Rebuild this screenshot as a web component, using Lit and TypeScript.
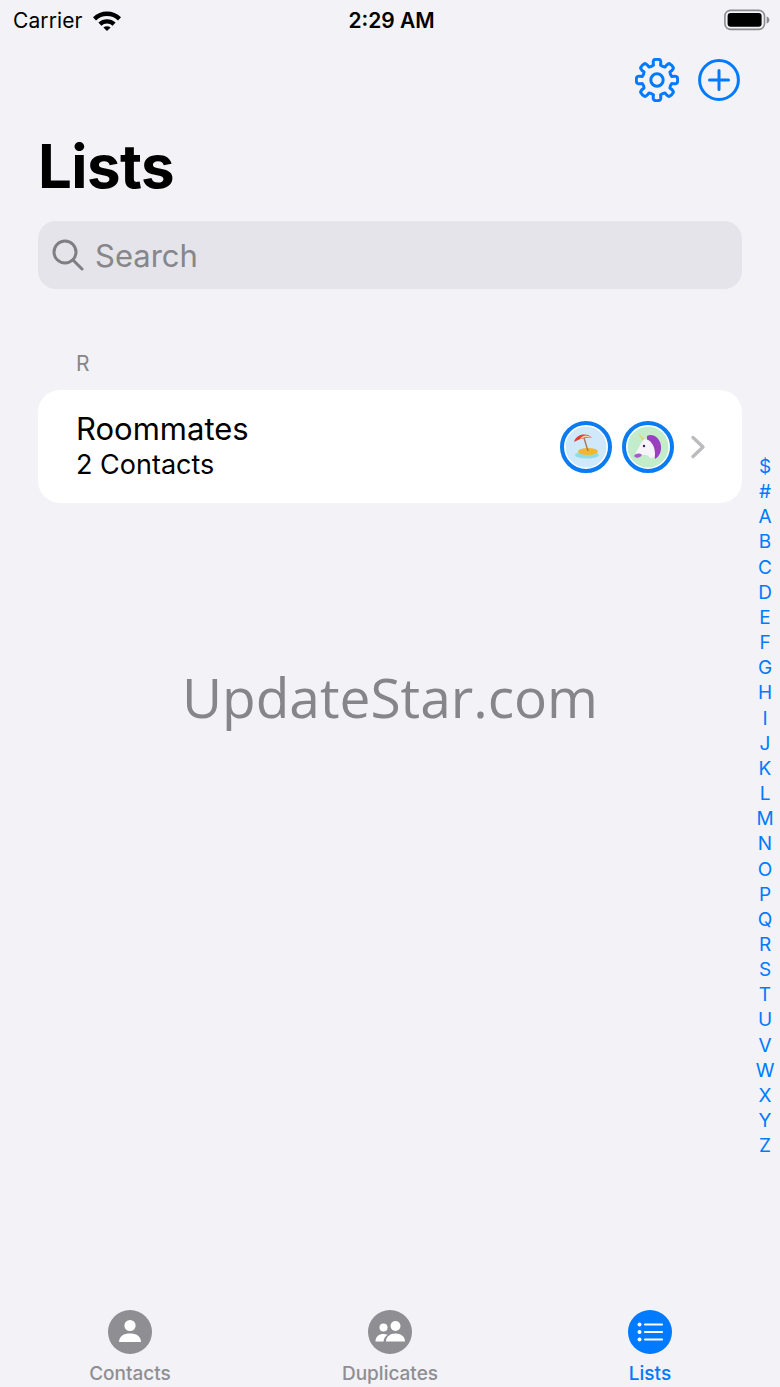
import { LitElement, html, css, svg } from 'lit';
import { customElement } from 'lit/decorators.js';

const LETTERS = '$#ABCDEFGHIJKLMNOPQRSTUVWXYZ'.split('');

// gear outline built from 8 teeth
function gearPath(cx: number, cy: number, outer: number, inner: number, teeth: number) {
  const pts: string[] = [];
  const step = (Math.PI * 2) / teeth;
  for (let i = 0; i < teeth; i++) {
    const a = i * step - Math.PI / 2;
    const at = (r: number, d: number) =>
      `${(cx + r * Math.cos(a + d * step)).toFixed(2)} ${(cy + r * Math.sin(a + d * step)).toFixed(2)}`;
    pts.push(`${i === 0 ? 'M' : 'L'}${at(inner, -0.3)}`);
    pts.push(`Q${at(outer + 0.6, -0.27)} ${at(outer, -0.12)}`);
    pts.push(`Q${at(outer + 0.6, 0)} ${at(outer, 0.12)}`);
    pts.push(`Q${at(outer + 0.6, 0.27)} ${at(inner, 0.3)}`);
    pts.push(`Q${at(inner - 1, 0.5)} ${at(inner, 0.7)}`);
  }
  return pts.join(' ') + 'Z';
}

@customElement('app-root')
export class AppRoot extends LitElement {
  static styles = css`
    :host {
      display: block;
      position: relative;
      width: 780px;
      height: 1387px;
      overflow: hidden;
      background: #f2f2f7;
      font-family: Inter, 'Liberation Sans', sans-serif;
      color: #000;
    }
    .page {
      height: 100%;
      display: flex;
      flex-direction: column;
    }
    .status {
      height: 40px;
      display: grid;
      grid-template-columns: 1fr auto 1fr;
      align-items: center;
      padding: 0 10px 0 13px;
      font-size: 21px;
    }
    .status-left {
      display: flex;
      align-items: center;
      gap: 9px;
    }
    .carrier {
      letter-spacing: 0.1px;
    }
    .time {
      font-weight: 600;
    }
    .status-right {
      display: flex;
      justify-content: flex-end;
    }
    .actions {
      height: 80px;
      display: flex;
      justify-content: flex-end;
      align-items: center;
      gap: 19px;
      padding-right: 40px;
    }
    .actions svg {
      display: block;
    }
    h1 {
      margin: 0;
      padding: 0 38px;
      height: 101px;
      line-height: 92px;
      font-size: 60px;
      font-weight: 700;
      letter-spacing: -0.6px;
    }
    .search {
      margin: 0 38px;
      height: 68px;
      border-radius: 18px;
      background: #e4e4ea;
      display: flex;
      align-items: center;
      gap: 11px;
      padding-left: 14px;
      color: #86868b;
      font-size: 31px;
    }
    .section {
      margin: 61px 76px 0;
      height: 40px;
      line-height: 28px;
      font-size: 21px;
      color: #86868b;
    }
    .card {
      margin: 0 38px;
      height: 113px;
      box-sizing: border-box;
      border-radius: 22px;
      background: #fff;
      display: flex;
      align-items: center;
      padding: 0 36px 0 38px;
    }
    .names {
      flex: 1;
    }
    .title {
      font-size: 31px;
      line-height: 36px;
    }
    .sub {
      font-size: 27px;
      line-height: 36px;
    }
    .avatars {
      display: flex;
      gap: 10px;
      margin-right: 16px;
    }
    .avatar {
      width: 52px;
      height: 52px;
      display: block;
    }
    .spacer {
      flex: 1;
    }
    .tabs {
      display: grid;
      grid-template-columns: repeat(3, 1fr);
      padding-bottom: 2px;
    }
    .tab {
      display: flex;
      flex-direction: column;
      align-items: center;
      gap: 8px;
      color: #8e8e93;
      font-size: 19px;
      line-height: 23px;
      font-weight: 500;
    }
    .tab.active {
      color: #007aff;
    }
    .tab svg {
      display: block;
    }
    .index {
      position: absolute;
      top: 454px;
      right: 0;
      width: 30px;
      display: flex;
      flex-direction: column;
      align-items: center;
      color: #007aff;
      font-size: 19px;
      line-height: 25.15px;
    }
    .watermark {
      position: absolute;
      top: 658px;
      left: 0;
      right: 0;
      text-align: center;
      font-family: 'Open Sans', sans-serif;
      font-size: 55px;
      line-height: 78px;
      color: #85858a;
    }
  `;

  private statusBar() {
    return html`
      <div class="status">
        <div class="status-left">
          <span class="carrier">Carrier</span>
          <svg width="30" height="22" viewBox="0 0 30 22">
            <path d="M1 8.2 A20 20 0 0 1 29 8.2 L26 11.4 A16 16 0 0 0 4 11.4Z" fill="#000" />
            <path d="M6.4 13.6 A12.4 12.4 0 0 1 23.6 13.6 L20.6 16.7 A8.2 8.2 0 0 0 9.4 16.7Z" fill="#000" />
            <path d="M11.4 18.6 A5.2 5.2 0 0 1 18.6 18.6 L15 22Z" fill="#000" />
          </svg>
        </div>
        <div class="time">2:29 AM</div>
        <div class="status-right">
          <svg width="46" height="22" viewBox="0 0 46 22">
            <rect x="0.9" y="1.4" width="39.6" height="19" rx="5.6" fill="none" stroke="#8b8b8f" stroke-width="1.6" />
            <rect x="3.6" y="4" width="34" height="13.8" rx="3" fill="#000" />
            <path d="M42.6 7.5 C44.6 8.2 45.4 9.4 45.4 11 C45.4 12.6 44.6 13.8 42.6 14.5Z" fill="#8b8b8f" />
          </svg>
        </div>
      </div>
    `;
  }

  private beach() {
    return svg`
      <circle cx="26" cy="26" r="24" fill="none" stroke="#0a7bf0" stroke-width="4" />
      <circle cx="26" cy="26" r="20.5" fill="#cfe9fb" />
      <ellipse cx="27" cy="34" rx="12" ry="3.6" fill="#8fdce8" />
      <ellipse cx="28" cy="30.5" rx="10" ry="3.4" fill="#f3b62e" />
      <path d="M24 17 L28 30" stroke="#a9794a" stroke-width="1.4" />
      <path d="M14 21 C16 13 27 11 32 17 C27 16 20 17 14 21Z" fill="#e23c2b" />
      <path d="M20 18 C22 14 27 13 32 17 C28 16 24 16 20 18Z" fill="#f6d9a8" />
    `;
  }

  private unicorn() {
    return svg`
      <circle cx="26" cy="26" r="24" fill="none" stroke="#0a7bf0" stroke-width="4" />
      <circle cx="26" cy="26" r="20.5" fill="#c3eccb" />
      <path d="M16 12 L24 19 L21 21Z" fill="#d9d77a" />
      <path d="M25 15 C31 12 38 17 39 25 C39.5 31 37 36 33 38 C33 32 31 26 25 21Z" fill="#9a3fc0" />
      <path d="M22 18 C28 18 33 24 33 33 C33 36 31 37 28 37 C25 32 20 34 15 36 C12 36 13 32 16 28 C18 25 19 21 22 18Z" fill="#f7f3fa" />
      <path d="M12 35 C14 32 18 32 20 34 C18 37 14 38 12 35Z" fill="#a65ccb" />
      <circle cx="22" cy="25" r="1.2" fill="#3a2350" />
    `;
  }

  private tab(label: string, active: boolean, icon: unknown) {
    return html`
      <div class="tab ${active ? 'active' : ''}">
        <svg width="44" height="44" viewBox="0 0 44 44">
          <circle cx="22" cy="22" r="22" fill=${active ? '#007aff' : '#8e8e93'} />
          ${icon}
        </svg>
        <span>${label}</span>
      </div>
    `;
  }

  render() {
    const person = svg`
      <circle cx="22" cy="15.5" r="5.6" fill="#fff" />
      <path d="M11 32 C11 26 16 23.5 22 23.5 C28 23.5 33 26 33 32Z" fill="#fff" />
    `;
    const people = svg`
      <circle cx="15.5" cy="17.5" r="4" fill="#fff" />
      <path d="M7.5 31.5 C7.5 26.5 11 24 15.5 24 C17 24 18.4 24.3 19.5 24.8 C17.4 26.4 15.8 28.6 15.5 31.5Z" fill="#fff" />
      <circle cx="27.5" cy="16" r="5" fill="#fff" />
      <path d="M18 31.5 C18 26.5 22 23.5 27.5 23.5 C33 23.5 37 26.5 37 31.5Z" fill="#fff" />
    `;
    const list = svg`
      <circle cx="11.5" cy="14.5" r="2" fill="#fff" />
      <circle cx="11.5" cy="22" r="2" fill="#fff" />
      <circle cx="11.5" cy="29.5" r="2" fill="#fff" />
      <path d="M17 14.5 H34 M17 22 H34 M17 29.5 H34" stroke="#fff" stroke-width="2.2" stroke-linecap="round" />
    `;
    return html`
      <div class="page">
        ${this.statusBar()}
        <div class="actions">
          <svg width="44" height="44" viewBox="0 0 44 44" fill="none" stroke="#007aff" stroke-width="3" stroke-linejoin="round">
            <path d=${gearPath(22, 22, 20.5, 15.2, 8)} />
            <circle cx="22" cy="22" r="6.2" />
          </svg>
          <svg width="42" height="42" viewBox="0 0 42 42" fill="none" stroke="#007aff" stroke-width="3" stroke-linecap="round">
            <circle cx="21" cy="21" r="19.4" />
            <path d="M21 11.5 V30.5 M11.5 21 H30.5" />
          </svg>
        </div>
        <h1>Lists</h1>
        <div class="search">
          <svg width="32" height="32" viewBox="0 0 32 32" fill="none" stroke="#7e7e83" stroke-width="3" stroke-linecap="round">
            <circle cx="13" cy="13" r="11" />
            <path d="M21 21 L30 30" />
          </svg>
          <span>Search</span>
        </div>
        <div class="section">R</div>
        <div class="card">
          <div class="names">
            <div class="title">Roommates</div>
            <div class="sub">2 Contacts</div>
          </div>
          <div class="avatars">
            <svg class="avatar" viewBox="0 0 52 52">${this.beach()}</svg>
            <svg class="avatar" viewBox="0 0 52 52">${this.unicorn()}</svg>
          </div>
          <svg width="16" height="24" viewBox="0 0 16 24" fill="none" stroke="#bcbcc0" stroke-width="3.4" stroke-linecap="round" stroke-linejoin="round">
            <path d="M3 2.5 L13 12 L3 21.5" />
          </svg>
        </div>
        <div class="spacer"></div>
        <div class="tabs">
          ${this.tab('Contacts', false, person)}
          ${this.tab('Duplicates', false, people)}
          ${this.tab('Lists', true, list)}
        </div>
      </div>
      <div class="watermark">UpdateStar.com</div>
      <div class="index">${LETTERS.map((l) => html`<span>${l}</span>`)}</div>
    `;
  }
}
